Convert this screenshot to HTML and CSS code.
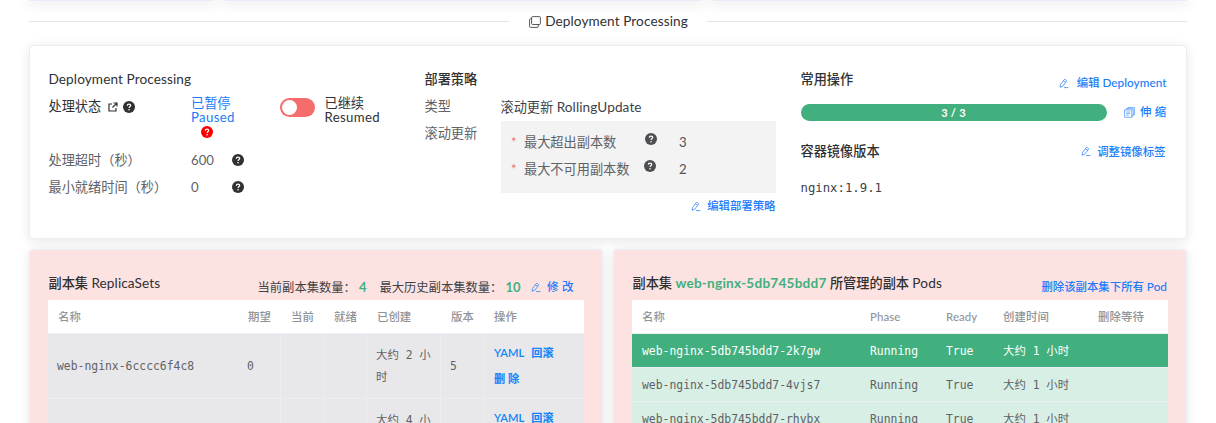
FILE: index.html
```html
<!DOCTYPE html>
<html lang="zh-CN">
<head>
<meta charset="utf-8">
<title>Deployment Processing</title>
<link rel="stylesheet" href="styles.css">
</head>
<body>
<svg class="defs" width="0" height="0">
  <symbol id="help" viewBox="0 0 12 12"><circle cx="6" cy="6" r="6" fill="currentColor"/><path d="M4.3 4.7C4.3 3.6 5 3 6 3s1.7.6 1.7 1.5C7.7 5.5 6.200 5.700 6.100 7" fill="none" stroke="#fff" stroke-width="1.25"/><circle cx="6.050" cy="8.700" r=".8" fill="#fff"/></symbol>
  <symbol id="edit" viewBox="0 0 11 11"><path d="M1.100 9.600 1.600 6.800 5.700 1.300Q6.200.7 6.900 1.200L8.100 2.100Q8.700 2.600 8.200 3.200L4.100 8.500ZM4.900 2.500 7.400 4.300M5.500 10H10.300" fill="none" stroke="currentColor" stroke-width=".8"/></symbol>
</svg>
<div class="page">
  <div class="summary"><div></div><div></div><div></div></div>
  <div class="divider">
    <span class="divider-text"><svg class="copy" viewBox="0 0 12 12"><path d="M3.600.6H10.400Q11.400.6 11.400 1.600V7.400Q11.400 8.500 10.400 8.500H3.600Q2.600 8.500 2.600 7.400V1.600Q2.600.6 3.600.6ZM2.600 2.700H1.600Q.6 2.700.6 3.800V10.300Q.6 11.400 1.600 11.400H8.200Q9.300 11.400 9.300 10.300V8.500" fill="none" stroke="currentColor" stroke-width=".8"/></svg><span class="en">Deployment Processing</span></span>
  </div>
  <section class="card processing">
    <div class="col">
      <h3 class="title"><span class="en">Deployment Processing</span></h3>
      <div class="row tall">
        <div class="label dark">处理状态<svg class="open" viewBox="0 0 10 10"><path d="M4 2H1V9H8V6M5.500 1H9V4.500M9 1 4.500 5.500" fill="none" stroke="currentColor" stroke-width="1.200"/></svg><svg class="help"><use href="#help"/></svg></div>
        <div class="status paused"><span>已暂停</span><span class="sub">Paused</span><svg class="help red"><use href="#help"/></svg></div>
        <div class="switch"><i></i></div>
        <div class="status"><span>已继续</span><span class="sub">Resumed</span></div>
      </div>
      <div class="row"><div class="label">处理超时（秒）</div><div class="num">600</div><svg class="help"><use href="#help"/></svg></div>
      <div class="row"><div class="label">最小就绪时间（秒）</div><div class="num">0</div><svg class="help"><use href="#help"/></svg></div>
    </div>
    <div class="col middle">
      <h3 class="title">部署策略</h3>
      <div class="row"><div class="key">类型</div><div class="value">滚动更新 <span class="en">RollingUpdate</span></div></div>
      <div class="row top"><div class="key">滚动更新</div>
        <div class="rolling">
          <div class="item"><b>*</b><span class="item-label">最大超出副本数<svg class="help grey"><use href="#help"/></svg></span><span>3</span></div>
          <div class="item"><b>*</b><span class="item-label near">最大不可用副本数<svg class="help grey"><use href="#help"/></svg></span><span>2</span></div>
        </div>
      </div>
      <a class="link strategy"><svg class="edit"><use href="#edit"/></svg>编辑部署策略</a>
    </div>
    <div class="col ops">
      <div class="head"><h3 class="title">常用操作</h3><a class="link low"><svg class="edit"><use href="#edit"/></svg>编辑 <span class="link-en">Deployment</span></a></div>
      <div class="scale"><div class="progress">3 / 3</div><a class="link spaced"><svg class="docs" viewBox="0 0 12 12"><path d="M.6 3.200H8.500V11.200H.6ZM2.400 5.500H6.700M2.400 7.200H6.700M2.400 8.900H5M2.500 3.200V1.800H10V9.800H8.500M4.200 1.800V.5H11.400V8.200H10" fill="none" stroke="currentColor" stroke-width=".65"/></svg>伸 缩</a></div>
      <div class="head image"><h3 class="title">容器镜像版本</h3><a class="link tag"><svg class="edit"><use href="#edit"/></svg>调整镜像标签</a></div>
      <div class="nginx">nginx:1.9.1</div>
    </div>
  </section>
  <div class="panels">
    <section class="card pink">
      <div class="panel-head">
        <h3 class="title">副本集 <span class="en">ReplicaSets</span></h3>
        <div class="counts"><span>当前副本集数量：</span><b>4</b><span>最大历史副本集数量：</span><b class="ten">10</b><a class="link spaced"><svg class="edit"><use href="#edit"/></svg>修 改</a></div>
      </div>
      <div class="table sets">
        <div class="tr th"><div>名称</div><div>期望</div><div>当前</div><div>就绪</div><div>已创建</div><div>版本</div><div>操作</div></div>
        <div class="tr"><div>web-nginx-6cccc6f4c8</div><div>0</div><div></div><div></div><div>大约 2 小时</div><div>5</div><div class="actions"><p><a>YAML</a><a>回滚</a></p><p><a>删 除</a></p></div></div>
        <div class="tr"><div></div><div></div><div></div><div></div><div>大约 4 小</div><div></div><div class="actions"><p><a>YAML</a><a>回滚</a></p></div></div>
      </div>
    </section>
    <section class="card pink">
      <div class="panel-head">
        <h3 class="title">副本集 <span class="en replica">web-nginx-5db745bdd7</span> 所管理的副本 <span class="en">Pods</span></h3>
        <a class="link delete">删除该副本集下所有 <span class="link-en">Pod</span></a>
      </div>
      <div class="table pods">
        <div class="tr th"><div>名称</div><div>Phase</div><div>Ready</div><div>创建时间</div><div>删除等待</div></div>
        <div class="tr active"><div>web-nginx-5db745bdd7-2k7gw</div><div>Running</div><div>True</div><div>大约 1 小时</div><div></div></div>
        <div class="tr"><div>web-nginx-5db745bdd7-4vjs7</div><div>Running</div><div>True</div><div>大约 1 小时</div><div></div></div>
        <div class="tr"><div>web-nginx-5db745bdd7-rhybx</div><div>Running</div><div>True</div><div>大约 1 小时</div><div></div></div>
      </div>
    </section>
  </div>
</div>
</body>
</html>
```
FILE: styles.css
```css
* { box-sizing: border-box; }
html, body { margin: 0; height: 423px; overflow: hidden; background: #fff; }
body { font: 13.2px/27px Lato, "Noto Sans CJK SC", sans-serif; color: #606266; }
h3, p { margin: 0; }
.defs { display: block; height: 0; }
.page { height: 423px; padding: 0 29px; overflow: hidden; }
svg { flex: none; }
.en { font-size: 13.6px; font-weight: 400; letter-spacing: .1px; }

.summary { display: grid; grid-template-columns: 184px 478px 476px; gap: 10px; height: 2px; }
.summary div { height: 1px; background: #e8edf8; box-shadow: 0 0 14px 2px rgba(0,0,0,.14); }
.divider { display: flex; align-items: center; height: 43px; padding-bottom: 4px; }
.divider::before, .divider::after { content: ""; flex: 1; height: 1px; background: #e0e3ec; }
.divider-text { display: flex; align-items: center; height: 27px; margin: 0 19px 0 20px; color: #303133; }
.copy { width: 12px; height: 12px; margin-right: 4px; }

.card { border: 1px solid #ebeef5; border-radius: 4px; background: #fff; box-shadow: 0 2px 12px rgba(0,0,0,.1); }
.processing { display: grid; grid-template-columns: repeat(3, 366px); gap: 10px; height: 194px; padding: 20px 19px 0 18.5px; }
.title { font-size: 13.2px; font-weight: 500; line-height: 27px; color: #303133; white-space: nowrap; }
.row { display: flex; align-items: center; height: 27px; }
.col:first-child .title { height: 26.6px; line-height: 26px; }
.tall { align-items: flex-start; height: 54px; }
.label { display: flex; align-items: center; width: 142px; white-space: nowrap; }
.dark { color: #303133; }
.open { width: 10px; height: 10px; margin: 1px 5px 0 7px; }
.help { width: 12px; height: 12px; color: #303133; }
.label .help { margin-top: 1px; }
.status { display: flex; flex-direction: column; padding-top: 3px; line-height: 14px; color: #303133; font-size: 13.2px; }
.paused { width: 89px; padding-left: .5px; color: #207cf8; }
.sub { letter-spacing: .35px; }
.paused .help { margin: 2px 0 0 10px; color: #f00; }
.switch { width: 35px; height: 19px; margin: 5px 10px 0 0; padding: 2px; border-radius: 10px; background: #f56c6c; }
.switch i { display: block; width: 15px; height: 15px; border-radius: 50%; background: #fff; }
.num { width: 41px; padding-left: .5px; }
.num + .help { margin-bottom: 1px; }

.key { width: 76px; }
.value { color: #404246; line-height: 26px; }
.top { align-items: flex-start; height: 100px; }
.rolling { flex: 1; height: 72px; margin: 1px 15px 0 0; padding-top: 8px; background: #f3f3f3; }
.item { display: flex; height: 27px; padding-left: 10.5px; color: #505256; }
.item b { width: 13px; font-weight: 400; color: #f56c6c; }
.item-label { display: flex; width: 155px; white-space: nowrap; color: #606266; }
.item-label .help { margin: 4px 0 0 29px; color: #4c4e52; }
.near .help { margin: 4px 0 0 14px; }
.link { display: flex; align-items: center; line-height: 16px; font-size: 11.4px; font-weight: 500; color: #207cf8; white-space: pre; }
.link-en { font-size: 11.8px; }
.edit { width: 10px; height: 11px; margin-right: 6px; }
.strategy { justify-content: flex-end; margin: -22px 15px 0 0; }

.head { display: flex; justify-content: space-between; }
.low { height: 34px; }
.low .edit { margin-right: 8px; }
.ops .head:first-child { height: 37px; }
.scale { display: flex; align-items: center; justify-content: space-between; height: 18px; }
.progress { width: 306px; height: 17px; border-radius: 9px; background: #42b07e; color: #fff; font: 700 11px/17px Lato, sans-serif; letter-spacing: .3px; text-align: center; }
.spaced { letter-spacing: .3px; }
.docs { width: 11px; height: 11px; margin-right: 5px; }
.image { margin-top: 17px; }
.tag { padding-right: 1px; }
.nginx { margin-top: 10px; font: 12.300px/27px "DejaVu Sans Mono", monospace; color: #404246; }

.panels { display: grid; grid-template-columns: 574px 574px; gap: 10px; width: 1158px; margin-top: 10px; }
.pink { height: 200px; padding: 20px 18px; background: #fde2e2; }
.panel-head { display: flex; justify-content: space-between; height: 30px; padding: 0 1px 0 .5px; }
.panel-head .title { line-height: 26px; }
.counts { display: flex; align-items: center; height: 34px; margin-right: 9px; font-size: 12.300px; color: #404246; white-space: nowrap; }
.counts b { width: 23.5px; padding-left: 3px; font-size: 13px; color: #42b07e; }
.counts .ten { width: 28.5px; }
.counts .spaced { font-size: 11.500px; letter-spacing: .4px; }
.delete { height: 34px; }
.replica { color: #42b07e; font-weight: 700; letter-spacing: .22px; }
.replica + .en { letter-spacing: .2px; }
.table { width: 536px; font: 11.400px/22px "DejaVu Sans Mono", "Noto Sans CJK SC", monospace; color: #606266; }
.tr { display: grid; }
.sets .tr { grid-template-columns: 190px 43px 43px 43px 74px 43px 100px; height: 65px; background: #e8e8ea; border-bottom: 1px solid #ebeef5; }
.tr > div { display: flex; align-items: center; padding-left: 10px; white-space: nowrap; }
.sets .tr:not(.th) > div { padding-left: 9px; white-space: normal; }
.sets .tr:not(.th) > div:not(:first-child):not(:last-child) { border-right: 1px solid #ebeef5; }
.sets .tr:last-child > div { align-items: flex-start; padding-top: 10px; }
.sets .tr:last-child > .actions { justify-content: flex-start; padding-top: 6px; }
.pods .tr { grid-template-columns: 228px 76px 57px 95px 80px; height: 34px; background: #d8efe5; border-bottom: 1px solid #ebeef5; }
.pods .active { background: #42b07e; color: #fff; }
.table .th { height: 34px; background: #fff; color: #909399; font: 500 11.400px/22px Lato, "Noto Sans CJK SC", sans-serif; }
.pods .th { letter-spacing: .1px; }
.tr > .actions { flex-direction: column; align-items: flex-start; justify-content: center; }
.sets .tr:not(.th) > .actions { padding-left: 10px; }
.actions p { height: 26px; line-height: 26px; }
.actions a { margin-right: 7px; color: #1084f8; font: 600 11.200px/26px Lato, "Noto Sans CJK SC", sans-serif; }
```
